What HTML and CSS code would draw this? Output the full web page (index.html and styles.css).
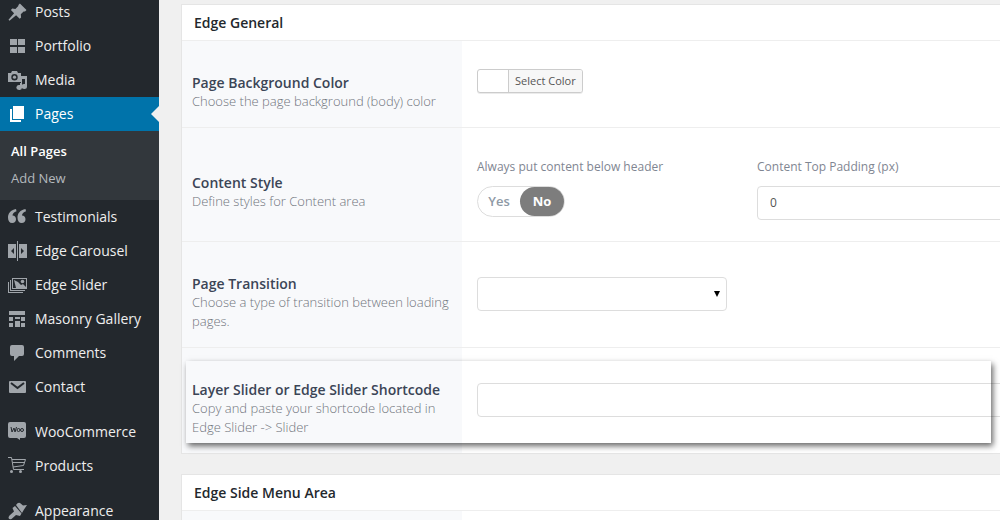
FILE: index.html
```html
<!DOCTYPE html>
<html lang="en">
  <head>
    <meta charset="UTF-8" />
    <meta name="viewport" content="width=device-width, initial-scale=1.0" />
    <title>Pages</title>
    <link rel="stylesheet" href="styles.css">
  </head>
  <body>
    <nav class="admin_menu">
      <ul class="menu_list">
        <li>
          <a href="#" class="menu_item">
            <svg class="menu_icon" viewBox="0 0 20 20"><path d="M10.4 3l1.5-1.5 6.6 6.6-1.5 1.5-1.4-.2-2.8 2.9.3 3.1-1.4 1.4-3.6-3.6-6.6 5.6-1-1 5.6-6.6-3.2-3.2 1.4-1.4 3.1.3 2.9-2.8z"/></svg>
            Posts
          </a>
        </li>
        <li>
          <a href="#" class="menu_item">
            <svg class="menu_icon" viewBox="0 0 20 20"><path d="M2 3h7v6H2zM10 3h7v6h-7zM2 11h7v6H2zM10 11h7v6h-7z"/></svg>
            Portfolio
          </a>
        </li>
        <li>
          <a href="#" class="menu_item">
            <svg class="menu_icon" viewBox="0 0 20 20"><path fill-rule="evenodd" d="M0 3h3l1-2h5l1 2h3v9H0zM6.500 4a3.200 3.200 0 1 0 0 6.400 3.200 3.200 0 0 0 0-6.400z"/><circle cx="6.500" cy="7.200" r="1.600"/><path d="M13 6h6v10.500a2.800 2.500 0 1 1-2-2.400V9h-3v8.500a2.800 2.500 0 1 1-2-2.400V13h1z"/></svg>
            Media
          </a>
        </li>
        <li>
          <a href="#" class="menu_item current">
            <svg class="menu_icon" viewBox="0 0 20 20"><path d="M5 2h11v13H5z"/><path d="M2 5h2v11h9v2H2z"/></svg>
            Pages
          </a>
          <ul class="submenu">
            <li><a href="#" class="active">All Pages</a></li>
            <li><a href="#">Add New</a></li>
          </ul>
        </li>
        <li>
          <a href="#" class="menu_item">
            <svg class="menu_icon" viewBox="0 0 20 20"><path d="M8 2C2.500 3 0 6.500 0 10.500 0 14 1.500 16 4.200 16 6.600 16 8 14.300 8 12.200 8 10 6.500 8.500 4.500 8.500 4.500 6.500 6 5 8.500 4.200zM17.500 2C12 3 9.500 6.500 9.500 10.500c0 3.500 1.500 5.500 4.200 5.500 2.400 0 3.800-1.700 3.800-3.800 0-2.200-1.500-3.700-3.500-3.700 0-2 1.500-3.500 4-4.300z"/></svg>
            Testimonials
          </a>
        </li>
        <li>
          <a href="#" class="menu_item">
            <svg class="menu_icon" viewBox="0 0 20 20"><path fill-rule="evenodd" d="M0 3h8v14H0zM6 7v6l-3-3zM11 3h8v14h-8zM13 7v6l3-3z"/><path d="M9 0h1v20H9z"/></svg>
            Edge Carousel
          </a>
        </li>
        <li>
          <a href="#" class="menu_item">
            <svg class="menu_icon" viewBox="0 0 20 20"><path fill-rule="evenodd" d="M4 3h15v11H4zM5 4v9h13V4z"/><path d="M6 5l4 2 3 3 2-1 3 3v1H8z"/><circle cx="14.500" cy="6.500" r="1.800"/><path d="M2 5h1v10h14v1H2zM0 7h1v10h14v1H0z"/></svg>
            Edge Slider
          </a>
        </li>
        <li>
          <a href="#" class="menu_item">
            <svg class="menu_icon" viewBox="0 0 20 20"><path d="M1 2h16v4H1zM1 8h4v4H1zM7 8h5v2H7zM13 8h4v4h-4zM1 14h4v4H1zM7 12h5v6H7zM13 14h4v4h-4z"/></svg>
            Masonry Gallery
          </a>
        </li>
        <li>
          <a href="#" class="menu_item">
            <svg class="menu_icon" viewBox="0 0 20 20"><path d="M4 2h10q2 0 2 2v7q0 2-2 2h-3l-5 5v-5H4q-2 0-2-2V4q0-2 2-2z"/></svg>
            Comments
          </a>
        </li>
        <li>
          <a href="#" class="menu_item">
            <svg class="menu_icon" viewBox="0 0 20 20"><rect x="1" y="4" width="17" height="12" rx="1"/><path class="cut_line" d="M3 6l6.500 5L16 6"/></svg>
            Contact
          </a>
        </li>
        <li class="group_start">
          <a href="#" class="menu_item">
            <svg class="menu_icon" viewBox="0 0 20 20"><path d="M2 0h14q2 0 2 2v12q0 2-2 2h-4v2l-3-2H2q-2 0-2-2V2q0-2 2-2z"/><path class="cut_line thin" d="M3 5l1 5 2-4 1 4 1.500-5"/><circle class="cut_line thin" cx="10.500" cy="8" r="1.500"/><circle class="cut_line thin" cx="14" cy="8" r="1.500"/></svg>
            WooCommerce
          </a>
        </li>
        <li>
          <a href="#" class="menu_item">
            <svg class="menu_icon" viewBox="0 0 20 20"><path class="line" d="M0 1.500h3.500l2 12H16M4 3.500h13.500l-2 6L5 11M4.500 6.500h12"/><circle cx="3.500" cy="15.500" r="1.500"/><circle cx="12.500" cy="15.500" r="1.500"/></svg>
            Products
          </a>
        </li>
        <li class="group_start">
          <a href="#" class="menu_item">
            <svg class="menu_icon" viewBox="0 0 20 20"><path d="M8 4q2-3 4-2l3 2.500 4-.5-3 4.500-2 3.500zM7 5l6.500 7.500-1.500 2.500-4-1-4.500 4q-2 1-3-1 0-1.500 1-2.500L6 10.500 4.500 7z"/></svg>
            Appearance
          </a>
        </li>
      </ul>
    </nav>

    <main class="content">
      <section class="meta_box">
        <h2>Edge General</h2>

        <div class="field_row color_row">
          <div class="field_desc">
            <h3>Page Background Color</h3>
            <p>Choose the page background (body) color</p>
          </div>
          <div class="field_content">
            <button type="button" class="color_button"><span>Select Color</span></button>
          </div>
        </div>

        <div class="field_row style_row">
          <div class="field_desc">
            <h3>Content Style</h3>
            <p>Define styles for Content area</p>
          </div>
          <div class="field_content two_cols">
            <fieldset class="switch_field">
              <legend class="field_label">Always put content below header</legend>
              <div class="switch">
                <label><input type="radio" name="below_header" value="yes"><span>Yes</span></label>
                <label><input type="radio" name="below_header" value="no" checked><span>No</span></label>
              </div>
            </fieldset>
            <div>
              <label class="field_label" for="top_padding">Content Top Padding (px)</label>
              <input type="text" class="text_input" id="top_padding" value="0">
            </div>
          </div>
        </div>

        <div class="field_row transition_row">
          <div class="field_desc">
            <h3 id="transition_title">Page Transition</h3>
            <p>Choose a type of transition between loading pages.</p>
          </div>
          <div class="field_content">
            <div class="select_box">
              <select aria-labelledby="transition_title">
                <option></option>
              </select>
              <svg class="select_arrow" viewBox="0 0 6 6"><path d="M0 0h6L3 6z"/></svg>
            </div>
          </div>
        </div>

        <div class="field_row shortcode_row">
          <div class="field_desc">
            <h3><label for="shortcode">Layer Slider or Edge Slider Shortcode</label></h3>
            <p>Copy and paste your shortcode located in Edge Slider -&gt; Slider</p>
          </div>
          <div class="field_content">
            <input type="text" class="text_input" id="shortcode">
          </div>
          <div class="highlight"></div>
        </div>
      </section>

      <section class="meta_box">
        <h2>Edge Side Menu Area</h2>
        <div class="field_row color_row">
          <div class="field_desc"></div>
        </div>
      </section>
    </main>
  </body>
</html>
```
FILE: styles.css
```css
* {
  box-sizing: border-box;
}

body {
  display: flex;
  height: 100vh;
  margin: 0;
  overflow: hidden;
  background: #f0f0f0;
  font-family: "Open Sans", sans-serif;
  font-size: 13px;
}

h2, h3, p, ul, fieldset {
  margin: 0;
  padding: 0;
}

button, input, select {
  font-family: inherit;
}

/* left admin menu */
.admin_menu {
  flex: none;
  width: 159px;
  background: #23282d;
}

.menu_list {
  margin-top: -5px;
}

.menu_list, .submenu {
  list-style: none;
}

.menu_item {
  display: flex;
  align-items: flex-start;
  gap: 7px;
  height: 34px;
  padding: 7px 0 0 8px;
  color: #eee;
  font-size: 14px;
  line-height: 20px;
  text-decoration: none;
  white-space: nowrap;
}

.menu_icon {
  flex: none;
  width: 20px;
  height: 20px;
  fill: #a0a5aa;
}

.menu_icon .line {
  fill: none;
  stroke: #a0a5aa;
}

.menu_icon .cut_line {
  fill: none;
  stroke: #23282d;
  stroke-width: 2;
}

.menu_icon .thin {
  stroke-width: 1;
}

.current {
  position: relative;
  background: #0073aa;
  color: #fff;
}

.current .menu_icon {
  fill: #fff;
}

.current::after {
  content: "";
  position: absolute;
  right: 0;
  top: 9px;
  border: 8px solid transparent;
  border-left: 0;
  border-right-color: #f0f0f0;
}

.submenu {
  padding: 7px 0 8px;
  background: #32373c;
}

.submenu a {
  display: block;
  padding-left: 11px;
  line-height: 27px;
  color: #b4b9be;
  text-decoration: none;
}

.submenu .active {
  color: #fff;
  font-weight: 600;
}

.group_start {
  margin-top: 11px;
}

/* meta boxes, they run past the right edge of the window */
.content {
  flex: 1;
  min-width: 0;
  padding: 4px 0 0 22px;
}

.meta_box {
  margin: 0 -40px 20px 0;
  background: #fff;
  border: 1px solid #e5e5e5;
}

.meta_box h2 {
  padding-left: 12px;
  line-height: 35px;
  color: #23282d;
  font-size: 14px;
  font-weight: 600;
}

.field_row {
  position: relative;
  display: grid;
  grid-template-columns: 280px 1fr;
  border-top: 1px solid #eee;
}

.field_desc {
  padding: 32px 10px 15px;
  background: #f8f9fb;
}

.field_desc h3 {
  color: #3b4556;
  font-size: 14px;
  font-weight: 600;
  line-height: 19px;
}

.field_desc p {
  color: #70747c;
  font-weight: 300;
  line-height: 19px;
}

.field_content {
  padding: 28px 15px 15px;
}

.color_row {
  min-height: 87px;
}

.style_row {
  min-height: 114px;
}

.style_row .field_desc {
  padding-top: 45px;
}

.transition_row,
.shortcode_row {
  min-height: 106px;
}

.transition_row .field_content,
.shortcode_row .field_content {
  padding-top: 35px;
}

.two_cols {
  display: grid;
  grid-template-columns: 250px 1fr;
  gap: 30px;
}

.field_label {
  display: block;
  padding: 0;
  margin-bottom: 8px;
  color: #7f8692;
  font-size: 12px;
  line-height: 22px;
}

/* color picker */
.color_button {
  display: block;
  height: 24px;
  padding: 0 0 0 30px;
  background: #fff;
  border: 1px solid #ccc;
  border-radius: 3px;
  box-shadow: 0 1px 0 rgba(0, 0, 0, 0.08);
}

.color_button span {
  display: block;
  padding: 0 6px;
  background: #f7f7f7;
  border-left: 1px solid #ccc;
  border-radius: 0 2px 2px 0;
  color: #555;
  font-size: 11px;
  line-height: 22px;
}

/* yes / no switch */
.switch_field {
  border: 0;
}

.switch {
  display: flex;
  width: 88px;
  height: 31px;
  border: 1px solid #ddd;
  border-radius: 16px;
}

.switch label {
  flex: 1;
}

.switch label + label {
  flex: none;
  width: 44px;
}

.switch input {
  position: absolute;
  opacity: 0;
}

.switch span {
  display: block;
  border-radius: 15px;
  color: #8e99a5;
  font-weight: 600;
  line-height: 29px;
  text-align: center;
}

.switch input:checked + span {
  background: #7d7d7d;
  color: #fff;
  font-weight: 700;
}

.text_input,
.select_box select {
  display: block;
  width: 100%;
  height: 34px;
  padding: 0 12px 2px;
  background: #fff;
  border: 1px solid #ddd;
  border-radius: 4px;
  color: #555;
  font-size: 12px;
}

.select_box {
  position: relative;
  width: 250px;
}

.select_box select {
  appearance: none;
}

.select_arrow {
  position: absolute;
  right: 7px;
  top: 14px;
  width: 6px;
  height: 6px;
  pointer-events: none;
}

/* shadow frame over the shortcode row */
.highlight {
  position: absolute;
  top: 13px;
  bottom: 10px;
  left: 4px;
  right: 48px;
  box-shadow: 2px 3px 6px rgba(0, 0, 0, 0.6);
  pointer-events: none;
}
```
